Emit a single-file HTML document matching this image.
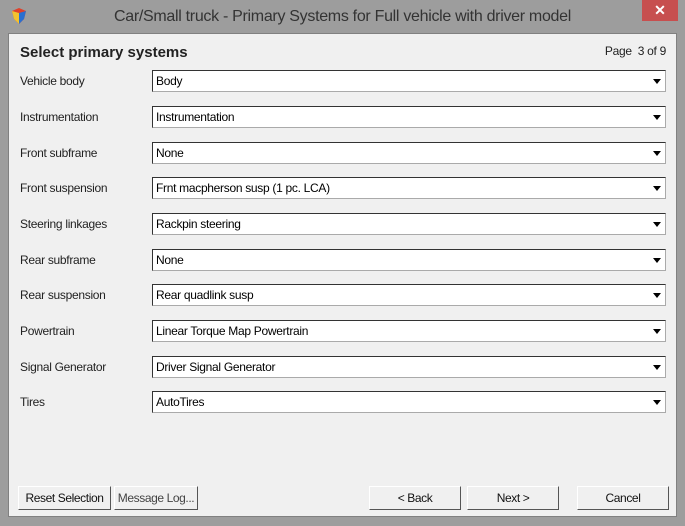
<!DOCTYPE html>
<html><head><style>
body{margin:0;width:685px;height:526px;background:#9d9d9d;font-family:"Liberation Sans",sans-serif;position:relative;overflow:hidden}
.title{position:absolute;left:0;top:0;width:685px;height:33px;text-align:center;line-height:34px;font-size:16px;color:#333;letter-spacing:-0.3px}
.close{position:absolute;left:642px;top:0;width:36px;height:21px;background:#c74f4f;color:#fff;text-align:center;line-height:20px;font-size:14px;font-weight:bold}
.content{position:absolute;left:8px;top:33px;width:669px;height:484px;background:#f0f0f0;border:1px solid #808080;box-sizing:border-box}
.h{position:absolute;left:11px;top:10px;font-size:15px;font-weight:bold;color:#222}
.pg{position:absolute;right:10px;top:10px;font-size:12px;color:#222;letter-spacing:-0.3px}
.lab{position:absolute;left:11px;font-size:12px;color:#222;letter-spacing:-0.3px}
.sel{position:absolute;left:143px;width:514px;height:22px;background:#fff;border:1px solid #333;border-right-color:#aaa;border-bottom-color:#aaa;box-sizing:border-box;font-size:12px;line-height:20px;padding-left:3px;color:#000;letter-spacing:-0.3px}
.sel i{position:absolute;right:4px;top:8px;width:0;height:0;border-left:4px solid transparent;border-right:4px solid transparent;border-top:5px solid #000}
.btn{position:absolute;top:452px;height:24px;background:#f0f0f0;border:1px solid #fff;border-right-color:#555;border-bottom-color:#555;box-sizing:border-box;font-size:12px;text-align:center;line-height:22px;color:#111;white-space:nowrap;overflow:hidden;letter-spacing:-0.4px}
</style></head><body>
<div class="title">Car/Small truck - Primary Systems for Full vehicle with driver model</div>
<svg style="position:absolute;left:10px;top:7px" width="18" height="18" viewBox="0 0 18 18"><path d="M9 1L16 4L14 12L9 17L4 12L2 4Z" fill="#e0402a"/><path d="M9 6L16 4L14 12L9 17Z" fill="#2a6fd0"/><path d="M9 6L2 4L4 12L9 17Z" fill="#f2c230"/></svg>
<div class="close">✕</div>
<div class="content">
<div class="h">Select primary systems</div>
<div class="pg">Page &nbsp;3 of 9</div>
<div class="lab" style="top:40px">Vehicle body</div><div class="sel" style="top:36px">Body<i></i></div>
<div class="lab" style="top:76px">Instrumentation</div><div class="sel" style="top:72px">Instrumentation<i></i></div>
<div class="lab" style="top:112px">Front subframe</div><div class="sel" style="top:108px">None<i></i></div>
<div class="lab" style="top:147px">Front suspension</div><div class="sel" style="top:143px">Frnt macpherson susp (1 pc. LCA)<i></i></div>
<div class="lab" style="top:183px">Steering linkages</div><div class="sel" style="top:179px">Rackpin steering<i></i></div>
<div class="lab" style="top:219px">Rear subframe</div><div class="sel" style="top:215px">None<i></i></div>
<div class="lab" style="top:254px">Rear suspension</div><div class="sel" style="top:250px">Rear quadlink susp<i></i></div>
<div class="lab" style="top:290px">Powertrain</div><div class="sel" style="top:286px">Linear Torque Map Powertrain<i></i></div>
<div class="lab" style="top:326px">Signal Generator</div><div class="sel" style="top:322px">Driver Signal Generator<i></i></div>
<div class="lab" style="top:361px">Tires</div><div class="sel" style="top:357px">AutoTires<i></i></div>
<div class="btn" style="left:9px;width:93px">Reset Selection</div>
<div class="btn" style="left:105px;width:84px;color:#444">Message Log...</div>
<div class="btn" style="left:360px;width:92px">&lt; Back</div>
<div class="btn" style="left:458px;width:92px">Next &gt;</div>
<div class="btn" style="left:568px;width:92px">Cancel</div>
</div>
</body></html>
